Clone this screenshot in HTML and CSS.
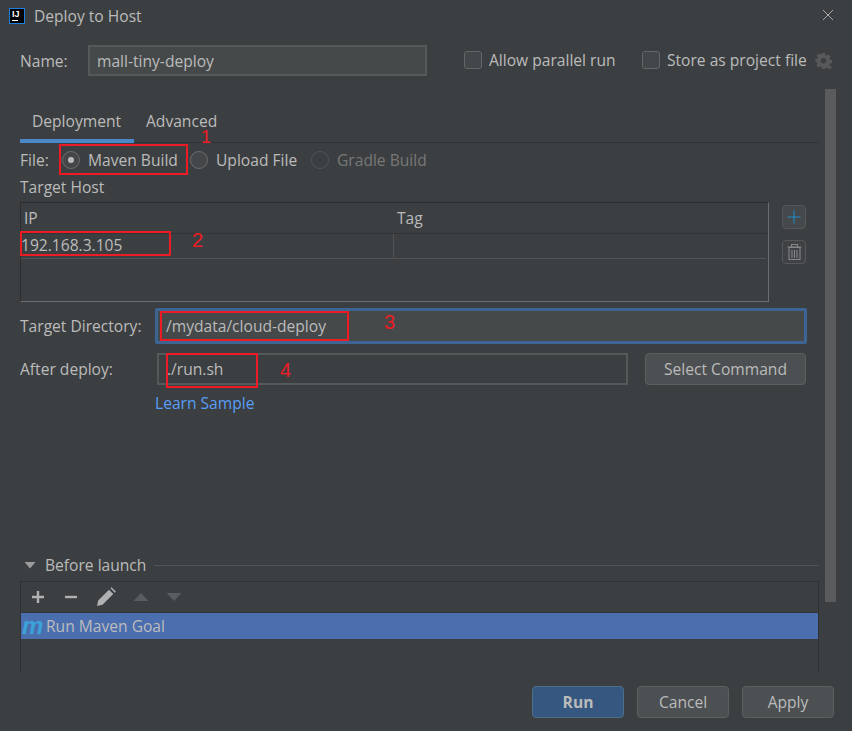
FILE: index.html
```html
<!DOCTYPE html>
<html lang="en">
<head>
    <meta charset="UTF-8">
    <meta name="viewport" content="width=device-width, initial-scale=1.0">
    <title>Deploy to Host</title>
    <link rel="stylesheet" href="styles.css">
</head>
<body>
    <div class="titlebar">
        <span class="app-icon"><span class="app-icon-text">IJ</span><span class="app-icon-line"></span></span>
        <span class="title">Deploy to Host</span>
        <svg class="close" width="12" height="12" viewBox="0 0 12 12"><path d="M1 1l10 10M11 1L1 11" stroke="#a9abad" stroke-width="1" fill="none"/></svg>
    </div>

    <div class="name-row">
        <label class="name-label">Name:</label>
        <div class="name-input">mall-tiny-deploy</div>
        <span class="checkbox first"></span>
        <span class="check-label parallel">Allow parallel run</span>
        <span class="checkbox"></span>
        <span class="check-label store">Store as project file</span>
        <svg class="gear" width="18" height="18" viewBox="0 0 18 18">
            <path fill="#58595b" fill-rule="evenodd" d="M7 1h3l.4 2.100 1.400.6 1.800-1.200 2 2-1.200 1.800.6 1.400 2.100.4v3l-2.100.4-.6 1.400 1.200 1.800-2 2-1.800-1.200-1.400.6L10 17H7l-.4-2.100-1.400-.6-1.800 1.200-2-2 1.200-1.800-.6-1.400L.3 10V7l2.100-.4.6-1.400-1.200-1.800 2-2 1.800 1.200 1.400-.6zM8.500 6a2.700 2.700 0 1 0 0 5.400 2.700 2.700 0 0 0 0-5.400z"/>
            <path fill="#58595b" d="M12 14.500h5.500L14.750 17.500z"/>
        </svg>
    </div>

    <div class="tabs">
        <div class="tab active">Deployment</div>
        <div class="tab">Advanced</div>
    </div>

    <div class="file-row">
        <span class="file-label">File:</span>
        <span class="radio checked"></span>
        <span class="radio-label maven">Maven Build</span>
        <span class="radio"></span>
        <span class="radio-label upload">Upload File</span>
        <span class="radio disabled"></span>
        <span class="radio-label muted">Gradle Build</span>
    </div>

    <div class="host-label">Target Host</div>
    <div class="host-row">
        <div class="host-table">
            <div class="host-head">
                <div class="head-ip">IP</div>
                <div class="head-tag">Tag</div>
            </div>
            <div class="host-item">
                <div class="cell-ip">192.168.3.105</div>
                <div class="cell-tag"></div>
            </div>
        </div>
        <div class="host-actions">
            <button class="icon-btn add">
                <svg width="14" height="14" viewBox="0 0 14 14"><path d="M7 0.500v13M0.500 7h13" stroke="#1a94d8" stroke-width="0.900" fill="none"/></svg>
            </button>
            <button class="icon-btn">
                <svg width="15" height="16" viewBox="0 0 15 16"><path d="M0.500 3h14M4.500 2.500V0.500h6v2M2 3.500h11V15.500H2zM5 6v8M7.500 6v8M10 6v8" stroke="#85878a" stroke-width="1.100" fill="none"/></svg>
            </button>
        </div>
    </div>

    <div class="dir-row">
        <span class="field-label">Target Directory:</span>
        <div class="dir-input">/mydata/cloud-deploy</div>
    </div>

    <div class="after-row">
        <span class="field-label">After deploy:</span>
        <div class="after-input">./run.sh</div>
        <button class="btn select-btn">Select Command</button>
    </div>

    <a class="learn" href="#">Learn Sample</a>

    <div class="before-head">
        <svg width="12" height="8" viewBox="0 0 12 8"><path d="M0.500 1h11L6 7.500z" fill="#9a9c9e"/></svg>
        <span class="before-title">Before launch</span>
        <span class="before-line"></span>
    </div>

    <div class="before-panel">
        <div class="panel-tools">
            <svg class="tool" width="16" height="16" viewBox="0 0 16 16"><path d="M8 2v12M2 8h12" stroke="#afb1b3" stroke-width="2.400" fill="none"/></svg>
            <svg class="tool" width="16" height="16" viewBox="0 0 16 16"><path d="M2 8h12" stroke="#afb1b3" stroke-width="2.400" fill="none"/></svg>
            <svg class="tool" width="20" height="20" viewBox="0 0 20 20"><path d="M1 19l1.200-5.500L13 2.700 17.300 7 6.500 17.800zM14.500 1.200l1-1 4.300 4.300-1 1.300z" fill="#afb1b3"/></svg>
            <svg class="tool" width="16" height="10" viewBox="0 0 16 10"><path d="M0.500 9L8 1l7.500 8z" fill="#5a5d5f"/></svg>
            <svg class="tool" width="16" height="10" viewBox="0 0 16 10"><path d="M0.500 1L8 9l7.500-8z" fill="#5a5d5f"/></svg>
        </div>
        <div class="panel-item">
            <span class="maven-icon">m</span>
            <span>Run Maven Goal</span>
        </div>
    </div>

    <div class="footer">
        <button class="btn primary">Run</button>
        <button class="btn">Cancel</button>
        <button class="btn">Apply</button>
    </div>

    <div class="scrollbar"></div>

    <!-- red notes drawn on top of the dialog -->
    <div class="mark mark-1"></div>
    <div class="mark mark-2"></div>
    <div class="mark mark-3"></div>
    <div class="mark mark-4"></div>
    <span class="num num-1">1</span>
    <span class="num num-2">2</span>
    <span class="num num-3">3</span>
    <span class="num num-4">4</span>
</body>
</html>
```

FILE: styles.css
```css
* {
    box-sizing: border-box;
}
body {
    margin: 0;
    width: 852px;
    height: 731px;
    position: relative;
    overflow: hidden;
    background-color: #3c3f41;
    color: #bbbbbb;
    font-family: "Open Sans", "Noto Sans", sans-serif;
    font-size: 15.6px;
    line-height: 20px;
}
button {
    font: inherit;
    color: inherit;
}

/* title */
.titlebar {
    height: 33px;
    display: flex;
    align-items: center;
    padding: 0 18px 2px 9px;
}
.app-icon {
    width: 16px;
    height: 16px;
    background-color: #000;
    border: 1px solid #1c7fe0;
    display: block;
}
.app-icon-text {
    display: block;
    color: #fff;
    font-family: "Liberation Sans", sans-serif;
    font-size: 9px;
    font-weight: bold;
    line-height: 9px;
    padding: 1px 0 0 2px;
}
.app-icon-line {
    display: block;
    width: 6px;
    height: 1px;
    margin: 1px 0 0 2px;
    background-color: #fff;
}
.title {
    margin-left: 9px;
    flex: 1;
}
.close {
    margin-bottom: 2px;
}

/* name row */
.name-row {
    margin-top: 12px;
    height: 31px;
    display: flex;
    align-items: center;
    padding-left: 20px;
}
.name-label {
    width: 68px;
}
.name-input {
    width: 339px;
    height: 31px;
    padding: 4px 7px;
    background-color: #45494a;
    border: 2px solid #56595a;
}
.checkbox {
    width: 18px;
    height: 18px;
    flex-shrink: 0;
    margin-bottom: 2px;
    border: 1px solid #646667;
    border-radius: 3px;
    background-color: #43474a;
}
.checkbox.first {
    margin-left: 37px;
}
.check-label {
    margin-left: 7px;
    padding-bottom: 2px;
}
.check-label.parallel {
    width: 153px;
}
.check-label.store {
    width: 148px;
}

/* tabs */
.tabs {
    margin: 24px 0 0 20px;
    width: 799px;
    height: 43px;
    display: flex;
    align-items: flex-end;
    border-bottom: 1px solid #2f3133;
}
.tab {
    height: 43px;
    padding: 13px 12px 0;
    margin-bottom: -1px;
    line-height: 16px;
}
.tab.active {
    width: 114px;
    border-bottom: 4px solid #4a88c7;
}

/* file radios */
.file-row {
    margin-top: 2px;
    height: 30px;
    padding-left: 20px;
    display: flex;
    align-items: center;
}
.file-label {
    width: 42px;
}
.radio {
    width: 18px;
    height: 18px;
    flex-shrink: 0;
    border-radius: 50%;
    border: 1px solid #6b6c6d;
    background-color: #43474a;
    display: flex;
    align-items: center;
    justify-content: center;
}
.radio.checked::after {
    content: "";
    width: 6px;
    height: 6px;
    border-radius: 50%;
    background-color: #bbbbbb;
}
.radio.disabled {
    border-color: #53565a;
    background-color: #3c3f41;
}
.radio-label {
    margin-left: 8px;
}
.radio-label.maven {
    width: 102px;
}
.radio-label.upload {
    width: 95px;
}
.radio-label.muted {
    color: #777777;
}

/* target host table */
.host-label {
    height: 24px;
    padding: 2px 0 0 20px;
}
.host-row {
    margin: 3px 0 0 20px;
    display: flex;
    gap: 13px;
}
.host-table {
    width: 749px;
    height: 100px;
    border-style: solid;
    border-width: 1px;
    border-color: #2b2d2f #6b6d6e #6b6d6e #2b2d2f;
}
.host-head {
    height: 31px;
    display: flex;
    border-bottom: 1px solid #323436;
    padding-top: 5px;
}
.head-ip {
    width: 376px;
    padding-left: 3px;
}
.host-item {
    height: 25px;
    display: flex;
    border-bottom: 1px solid #515354;
    margin-right: 2px;
}
.cell-ip {
    width: 372px;
    padding-top: 1px;
}
.cell-tag {
    flex: 1;
    border-left: 1px solid #515354;
}
.host-actions {
    padding-top: 3px;
    display: flex;
    flex-direction: column;
    gap: 11px;
}
.icon-btn {
    width: 24px;
    height: 24px;
    padding: 0;
    display: flex;
    align-items: center;
    justify-content: center;
    background-color: #3f4244;
    border: 1px solid #555759;
    border-radius: 4px;
}
.icon-btn.add {
    background-color: #46494b;
}

/* target directory, after deploy */
.field-label {
    width: 135px;
    flex-shrink: 0;
}
.dir-row {
    margin-top: 6px;
    padding-left: 20px;
    display: flex;
    align-items: center;
}
.dir-input {
    width: 652px;
    height: 36px;
    padding: 5px 8px;
    background-color: #45494a;
    border: 3px solid #3c6594;
    border-radius: 2px;
}
.after-row {
    margin-top: 9px;
    padding-left: 20px;
    display: flex;
    align-items: center;
}
.after-input {
    margin-left: 2px;
    width: 471px;
    height: 32px;
    padding: 4px 8px;
    border: 2px solid #56595a;
}
.btn {
    width: 92px;
    height: 32px;
    padding: 0;
    background-color: #4c5052;
    border: 1px solid #5e6060;
    border-radius: 4px;
}
.select-btn {
    width: 161px;
    margin-left: 17px;
}
.learn {
    display: block;
    width: 110px;
    height: 19px;
    margin: 8px 0 0 155px;
    color: #589df6;
    text-decoration: none;
}

/* before launch */
.before-head {
    margin: 143px 0 0 20px;
    width: 799px;
    height: 20px;
    display: flex;
    align-items: center;
    padding-left: 4px;
}
.before-title {
    margin-left: 9px;
}
.before-line {
    flex: 1;
    height: 1px;
    margin-left: 8px;
    background-color: #515354;
}
.before-panel {
    margin: 6px 0 0 20px;
    width: 799px;
    height: 91px;
    border-style: solid;
    border-width: 1px 1px 0;
    border-color: #2f3133;
}
.panel-tools {
    height: 31px;
    display: flex;
    align-items: center;
    gap: 17px;
    padding-left: 9px;
    border-bottom: 1px solid #323436;
}
.panel-item {
    height: 26px;
    display: flex;
    align-items: center;
    background-color: #4b6eaf;
}
.maven-icon {
    width: 25px;
    padding-left: 1px;
    color: #3ba3d8;
    font-family: "Liberation Sans", sans-serif;
    font-size: 24px;
    font-style: italic;
    font-weight: bold;
    line-height: 20px;
}

/* footer */
.footer {
    margin: 14px 18px 0 0;
    display: flex;
    justify-content: flex-end;
    gap: 13px;
}
.btn.primary {
    background-color: #365880;
    border-color: #4c708c;
    font-weight: bold;
}

/* side scrollbar */
.scrollbar {
    position: absolute;
    left: 825px;
    top: 89px;
    width: 11px;
    height: 513px;
    background-color: #5a5b5d;
}

/* notes */
.mark {
    position: absolute;
    border: 2px solid #ed1c24;
}
.mark-1 {
    left: 59px;
    top: 144px;
    width: 129px;
    height: 31px;
}
.mark-2 {
    left: 20px;
    top: 231px;
    width: 151px;
    height: 25px;
}
.mark-3 {
    left: 160px;
    top: 311px;
    width: 189px;
    height: 30px;
}
.mark-4 {
    left: 166px;
    top: 353px;
    width: 92px;
    height: 35px;
}
.num {
    position: absolute;
    color: #ed1c24;
    font-family: "Liberation Sans", sans-serif;
    font-size: 20px;
    line-height: 16px;
}
.num-1 {
    left: 201px;
    top: 129px;
    font-size: 18px;
}
.num-2 {
    left: 192px;
    top: 232px;
}
.num-3 {
    left: 384px;
    top: 314px;
}
.num-4 {
    left: 280px;
    top: 362px;
}
```
